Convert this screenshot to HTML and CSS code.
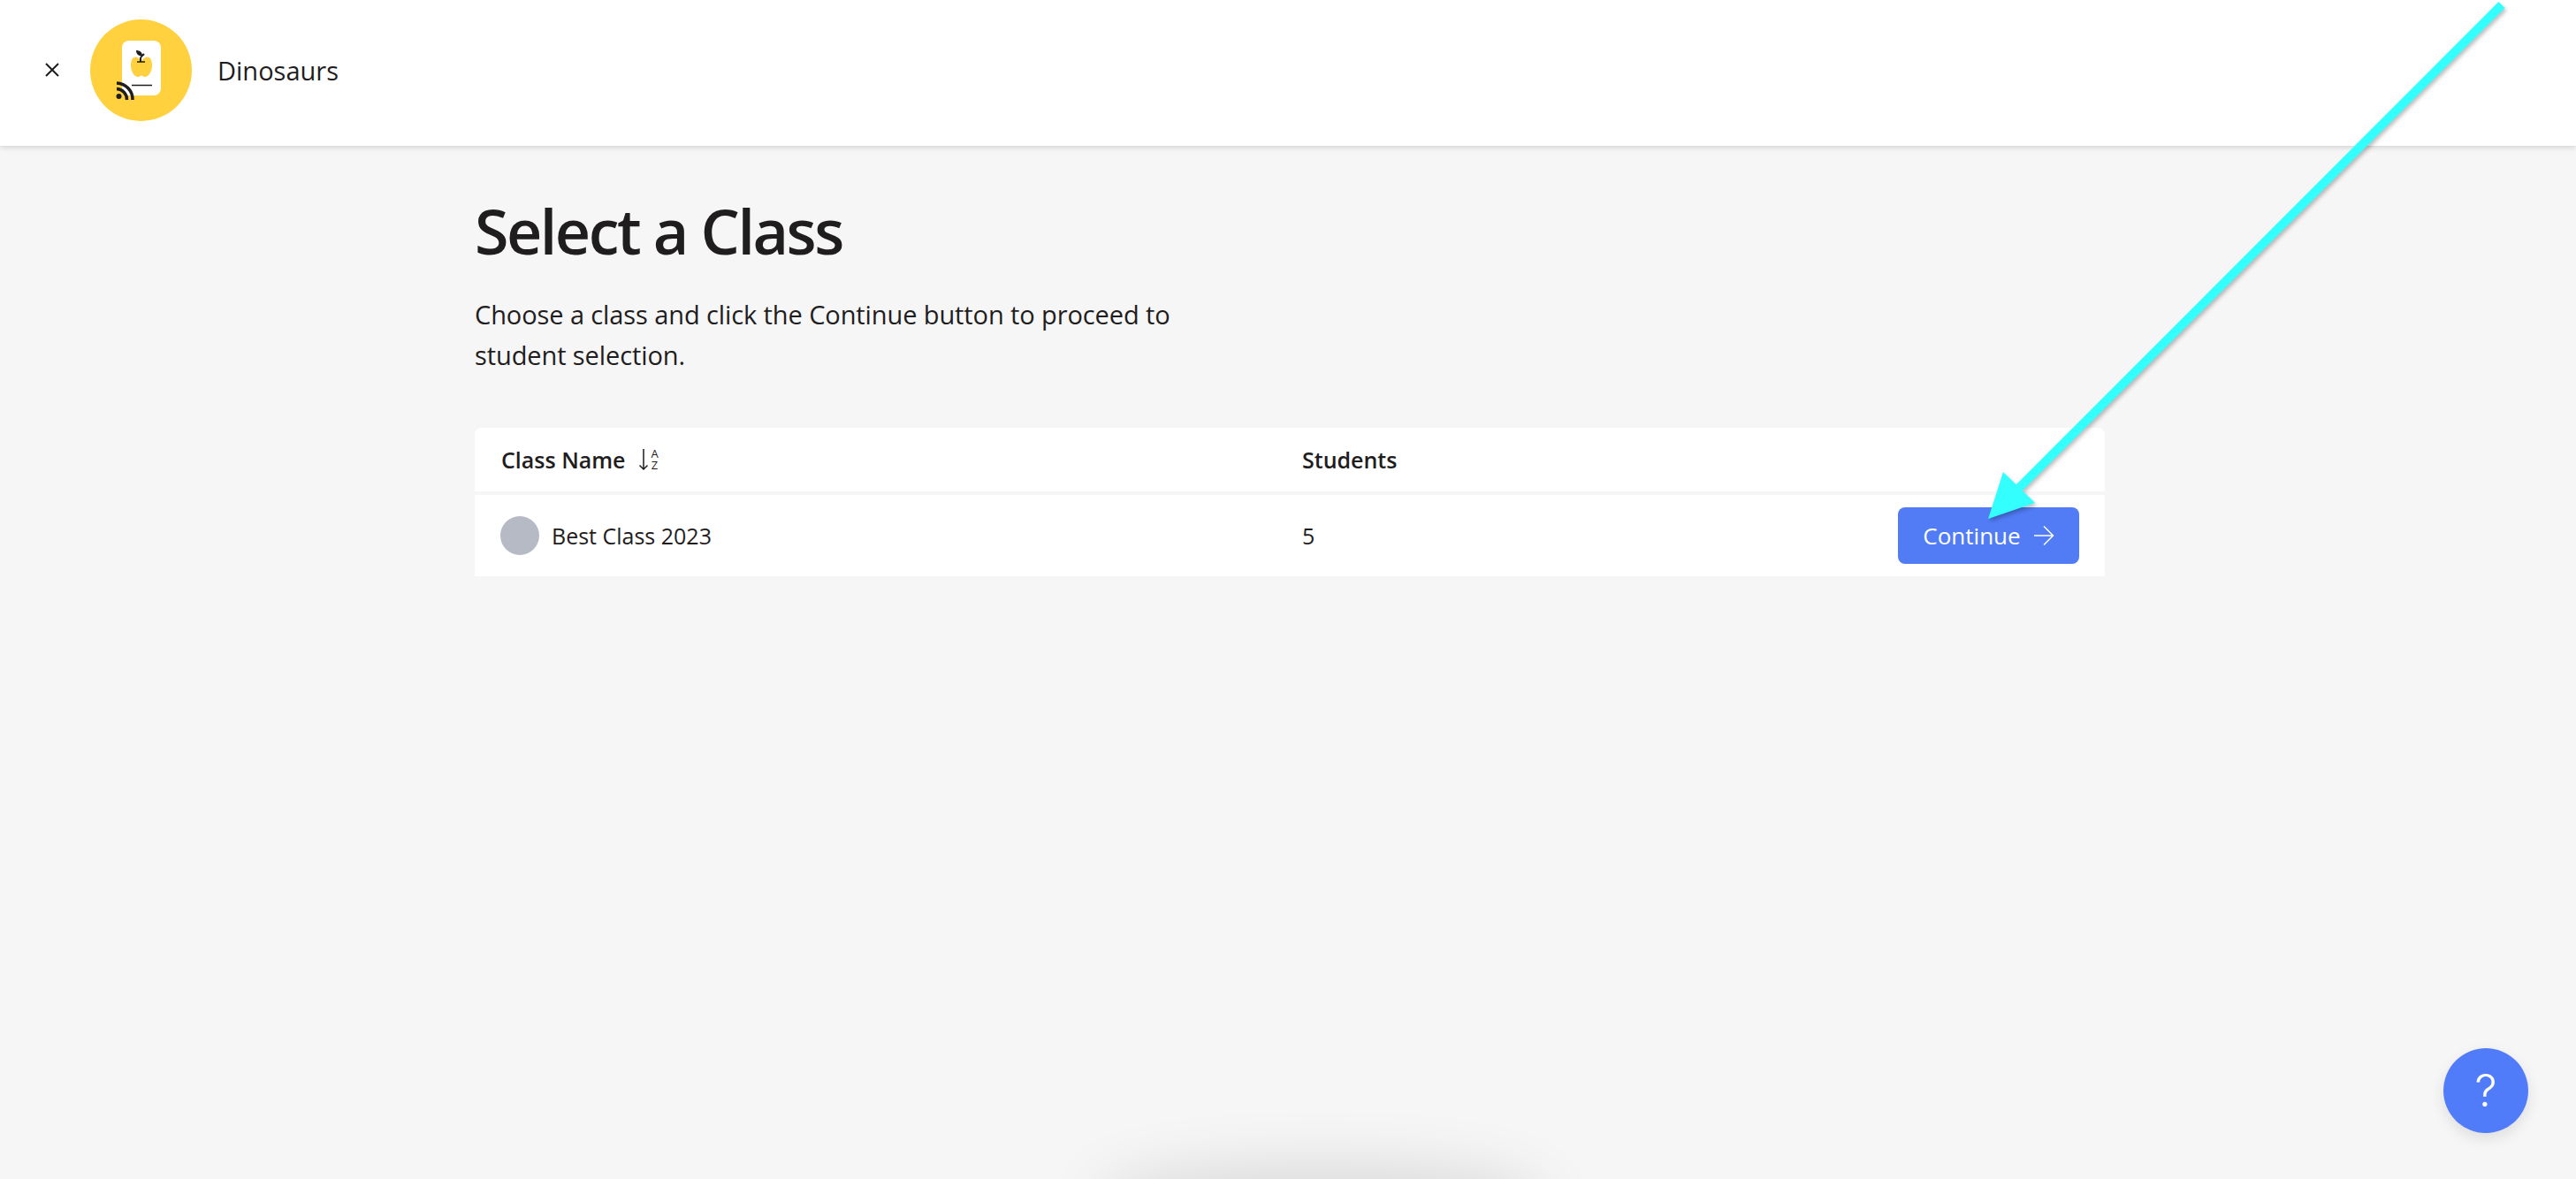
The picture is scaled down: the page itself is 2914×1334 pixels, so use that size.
FILE: index.html
```html
<!DOCTYPE html>
<html lang="en">
<head>
    <meta charset="UTF-8">
    <title>Select a Class</title>
    <link rel="stylesheet" href="styles.css">
</head>
<body>
    <header class="topbar">
        <svg class="close-icon" viewBox="0 0 16 16">
            <path d="M1 1L15 15M15 1L1 15" fill="none" stroke="#1f1d1e" stroke-width="2"/>
        </svg>
        <svg class="app-logo" viewBox="0 0 115 115">
            <circle cx="57.5" cy="57.5" r="57.5" fill="#ffd13f"/>
            <rect x="36" y="24" width="44" height="62" rx="8" fill="#fff"/>
            <path d="M58 47C53 40 46 41 46 52C46 59 50 65 54 65C56 65 57 63.500 58 63.500C59 63.500 60 65 62 65C66 65 70 59 70 52C70 41 63 40 58 47Z" fill="#ffd13f"/>
            <path d="M57 48V44C57 42 59 41 61 39" fill="none" stroke="#1f1d1e" stroke-width="2"/>
            <path d="M53 48H62" stroke="#1f1d1e" stroke-width="1.5"/>
            <path d="M52 35C56 35 59 37 59 41C55 42 52 39 52 35Z" fill="#1f1d1e"/>
            <path d="M47 74.500H70" stroke="#1f1d1e" stroke-width="1.500"/>
            <circle cx="32.500" cy="87" r="3" fill="#1f1d1e"/>
            <path d="M30 78.500A12 12 0 0 1 41.500 91M30 72A18.500 18.500 0 0 1 48 91" fill="none" stroke="#1f1d1e" stroke-width="3.500"/>
        </svg>
        <span class="topbar-title">Dinosaurs</span>
    </header>

    <main class="content">
        <h1 class="page-title">Select a Class</h1>
        <p class="page-intro">Choose a class and click the Continue button to proceed to student selection.</p>

        <div class="class-table">
            <div class="table-row table-head">
                <div class="col-name">
                    Class Name
                    <svg class="sort-icon" viewBox="0 0 24 24">
                        <path d="M6 0V23M1.500 18.500L6 23L10.500 18.500" fill="none" stroke="#1f1d1e" stroke-width="1.500"/>
                        <text x="18.500" y="10" class="sort-letter">A</text>
                        <text x="18.500" y="23" class="sort-letter">Z</text>
                    </svg>
                </div>
                <div class="col-students">Students</div>
                <div></div>
            </div>
            <div class="table-row table-body">
                <div class="col-name">
                    <span class="class-avatar"></span>
                    Best Class 2023
                </div>
                <div class="col-students">5</div>
                <div class="col-action">
                    <button class="continue-btn">
                        Continue
                        <svg class="continue-arrow" viewBox="0 0 24 24">
                            <path d="M1 12H22M12 1.500L22.500 12L12 22.500" fill="none" stroke="#fff" stroke-width="1.500"/>
                        </svg>
                    </button>
                </div>
            </div>
        </div>
    </main>

    <button class="help-btn">?</button>
    <div class="bottom-glow"></div>

    <svg class="callout" viewBox="0 0 2914 1334">
        <path d="M2830 5.500L2284 552" stroke="#33ffff" stroke-width="10" fill="none"/>
        <polygon points="2249,587 2266,534 2302,569" fill="#33ffff"/>
    </svg>
</body>
</html>
```

FILE: styles.css
```css
:root {
    --ink: #1f1d1e;
    --page: #f6f6f6;
    --blue: #527cf6;
}

html, body {
    margin: 0;
    padding: 0;
    height: 100%;
}

body {
    position: relative;
    overflow: hidden;
    background-color: var(--page);
    color: var(--ink);
    font-family: "Open Sans", sans-serif;
}

.topbar {
    display: flex;
    align-items: center;
    height: 165px;
    padding: 0 0 7px 51px;
    box-sizing: border-box;
    background-color: #fff;
    box-shadow: 0 2px 6px rgba(0, 0, 0, 0.14);
}

.close-icon {
    width: 16px;
    height: 16px;
}

.app-logo {
    width: 115px;
    height: 115px;
    margin-left: 35px;
}

.topbar-title {
    margin-left: 29px;
    font-size: 29px;
}

.content {
    width: 1844px;
    margin-left: 537px;
}

.page-title {
    margin: 48px 0 0;
    font-size: 70px;
    line-height: 96px;
    font-weight: 600;
    letter-spacing: -2.500px;
}

.page-intro {
    width: 820px;
    margin: 24px 0 0;
    font-size: 29px;
    line-height: 46px;
    letter-spacing: -0.100px;
}

.class-table {
    margin-top: 59px;
    font-size: 25px;
}

.table-row {
    display: grid;
    grid-template-columns: 906px 1fr auto;
    align-items: center;
    padding: 0 29px 0 30px;
    background-color: #fff;
}

.table-head {
    height: 72px;
    margin-bottom: 4px;
    border-radius: 8px 8px 0 0;
    font-weight: 600;
}

.table-body {
    height: 92px;
}

.col-name {
    display: flex;
    align-items: center;
}

.sort-icon {
    width: 24px;
    height: 24px;
    margin-left: 14px;
    overflow: visible;
}

.sort-letter {
    font-size: 13px;
    font-weight: 400;
    text-anchor: middle;
    fill: var(--ink);
}

.class-avatar {
    width: 44px;
    height: 44px;
    margin: 0 14px 0 -1px;
    border-radius: 50%;
    background-color: #b5bac5;
}

.continue-btn {
    display: flex;
    align-items: center;
    justify-content: center;
    width: 205px;
    height: 64px;
    padding: 0;
    border: none;
    border-radius: 8px;
    background-color: var(--blue);
    color: #fff;
    font-family: inherit;
    font-size: 26px;
}

.continue-arrow {
    width: 24px;
    height: 24px;
    margin-left: 14px;
}

.help-btn {
    position: absolute;
    left: 2764px;
    top: 1186px;
    width: 96px;
    height: 96px;
    padding: 0;
    border: none;
    border-radius: 50%;
    background-color: #507cf9;
    color: #fff;
    font-family: Inter, sans-serif;
    font-size: 50px;
    font-weight: 300;
    box-shadow: 0 6px 16px rgba(0, 0, 0, 0.1);
}

.bottom-glow {
    position: absolute;
    left: 1270px;
    top: 1350px;
    width: 450px;
    height: 30px;
    border-radius: 50%;
    box-shadow: 0 0 70px 30px rgba(0, 0, 0, 0.12);
}

.callout {
    position: absolute;
    left: 0;
    top: 0;
    width: 2914px;
    height: 1334px;
    filter: drop-shadow(2px 3px 2px rgba(0, 0, 0, 0.25));
}
```
